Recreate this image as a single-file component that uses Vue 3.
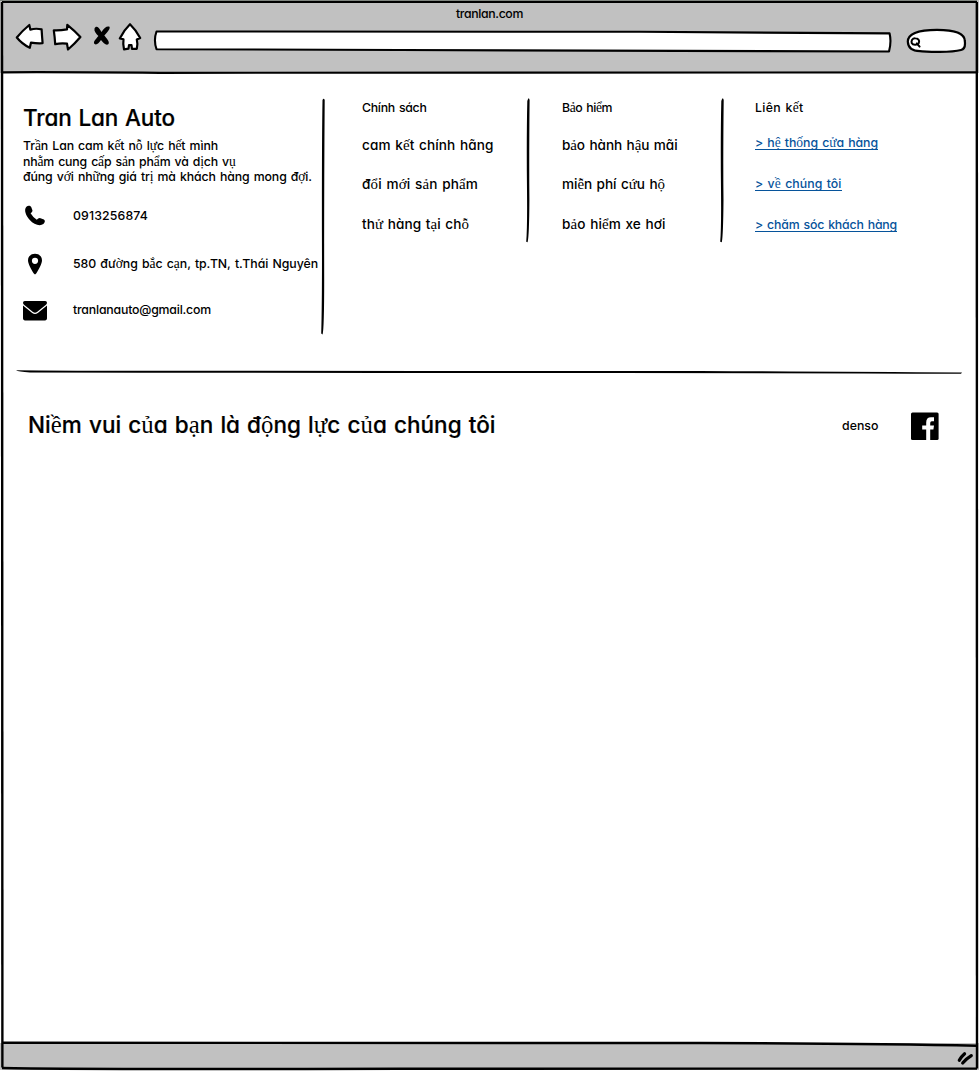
<script setup>
import { h } from 'vue'

const about = [
  { text: 'Trần Lan cam kết nỗ lực hết mình', width: 195 },
  { text: 'nhằm cung cấp sản phẩm và dịch vụ', width: 212.5 },
  { text: 'đúng với những giá trị mà khách hàng mong đợi.', width: 289 },
]

const policy = [
  { text: 'cam kết chính hãng', width: 131.5 },
  { text: 'đổi mới sản phẩm', width: 116 },
  { text: 'thử hàng tại chỗ', width: 107 },
]

const insurance = [
  { text: 'bảo hành hậu mãi', width: 115.5 },
  { text: 'miễn phí cứu hộ', width: 103 },
  { text: 'bảo hiểm xe hơi', width: 103.5 },
]

const links = [
  { text: '> hệ thống cửa hàng', width: 123 },
  { text: '> về chúng tôi', width: 86.5 },
  { text: '> chăm sóc khách hàng', width: 142 },
]

// Spreads the letters of an element so that the line is as wide as asked.
const vFit = {
  mounted(el, { value }) {
    const natural = el.getBoundingClientRect().width
    el.style.letterSpacing = (value - natural) / [...el.textContent].length + 'px'
  },
}

const Mixed = (props) =>
  props.text
    .split(/([\u1e00-\u1eff]+)/)
    .filter(Boolean)
    .map((part) => (/[\u1e00-\u1eff]/.test(part) ? h('span', { class: 'marked' }, part) : part))
Mixed.props = ['text']
</script>

<template>
  <div class="window">
    <header class="chrome">
      <div class="title"><span v-fit="67" class="t">tranlan.com</span></div>
      <div class="toolbar">
        <svg class="nav" width="132" height="36" viewBox="14 20 132 36">
          <g fill="#fff" stroke="#000" stroke-width="2.2" stroke-linejoin="round">
            <path d="M16.8 37.5 Q22 31 29.3 25 L30.3 29.6 Q36 28 41.6 29.4 Q42 36 42.6 43.2 Q37 43.6 31 42.6 L29.8 47.8 Q22 44 16.8 37.5Z" />
            <path d="M53.8 30.3 Q60 30.6 67 29.4 L67.3 24.8 Q75 31 80.4 37 Q75 43.5 68 49.5 L67 43.7 Q61 43 55.2 44.2 Q54.8 37 53.8 30.3Z" />
            <path d="M130 24.2 Q136 30 140.2 38 L136.8 39.5 Q138 44 136.8 48.8 L132 48.8 L131.5 45.2 L129 45.2 L128.5 48.6 L124 49.3 Q122.8 44 123.5 39.3 L119.8 38.4 Q124 30 130 24.2Z" />
          </g>
          <path d="M94.5 28.5 C96 25.5 98.5 26.5 101.5 32 C104 27.5 107.5 25.5 109.5 26.8 C110.5 29 107.5 32 104.3 35.5 C106.5 38.5 110 41.5 108.5 44 C106.5 46 103.5 43.5 101 40 C98.5 43.5 96.5 45.5 94.3 43.8 C93 41.5 96 39 98.4 36 C96 33.5 93.8 31 94.5 28.5Z" />
        </svg>
        <svg class="address" width="742" height="26" viewBox="152 28 742 26">
          <path d="M156.5 31.5 Q400 32 640 31.8 Q780 33.2 889.6 33.4 Q891.6 42 889 51.5 Q600 51.2 400 50 Q250 49 156.5 49.2 Q153.4 40 156.5 31.5Z" fill="#fff" stroke="#000" stroke-width="2.1" stroke-linejoin="round" />
        </svg>
        <svg class="search" width="62" height="28" viewBox="905 27 62 28">
          <path d="M907.8 41.5 C908 32 922 29.8 937 29.8 C952 29.8 964.8 32 964.8 41 C965.5 46 965 49 961 50 C950 53 935 52 920 51.2 C912 51 908 47 907.8 41.5Z" fill="#fff" stroke="#000" stroke-width="2.2" />
          <g fill="none" stroke="#000" stroke-width="2" stroke-linecap="round">
            <path d="M915.3 38.2 C912.3 38 911 40.8 911.7 43 C912.8 45.3 917.5 45.4 918.8 43 C920 40.3 918 38.3 915.3 38.2Z" />
            <path d="M916.8 43.4 L919.6 46.6" />
          </g>
        </svg>
      </div>
    </header>

    <main class="page">
      <section class="info">
        <div class="company">
          <h1><span v-fit="152" class="t">Tran Lan Auto</span></h1>
          <p v-for="line in about" :key="line.text" class="line">
            <span v-fit="line.width" class="t"><Mixed :text="line.text" /></span>
          </p>
          <ul class="contacts">
            <li>
              <svg width="24" height="24" viewBox="0 0 24 24">
                <path d="M3.4 2.8 C5 1.4 7.2 1.6 8.2 3 L9.5 6.6 Q9.6 8 7.6 9.3 Q9.6 13 13.8 15.7 Q15 14 16.8 14 L20.9 15.6 C22.5 16.6 22 18.7 20.4 20 C17 22.6 10.8 20.6 6.8 16 C2.8 11.5 0.6 6 3.4 2.8Z" />
              </svg>
              <span v-fit="75" class="t">0913256874</span>
            </li>
            <li>
              <svg width="24" height="24" viewBox="0 0 24 24">
                <path fill-rule="evenodd" d="M12 1.7 C16 1.7 19 4.5 19 8.2 C19 12 15.7 17 13.2 21.6 Q12 23.2 10.8 21.6 C8.3 17 5 12 5 8.2 C5 4.5 8 1.7 12 1.7Z M12 5.7 A3.1 3.1 0 1 0 12 11.9 A3.1 3.1 0 1 0 12 5.7Z" />
              </svg>
              <span v-fit="245" class="t"><Mixed text="580 đường bắc cạn, tp.TN, t.Thái Nguyên" /></span>
            </li>
            <li>
              <svg width="24" height="24" viewBox="0 0 24 24">
                <path d="M1.8 3 H22.2 Q24 3 24 4.8 Q24 6 23 6.7 L14 14 Q12 15.4 10 14 L1 6.7 Q0 6 0 4.8 Q0 3 1.8 3Z M0 7.6 L9.2 15 Q12 17 14.8 15 L24 7.6 V20.6 Q24 22.4 22.2 22.4 H1.8 Q0 22.4 0 20.6Z" />
              </svg>
              <span v-fit="138" class="t">tranlanauto@gmail.com</span>
            </li>
          </ul>
        </div>
        <svg class="rule" width="6" height="238" viewBox="320 97 6 238">
          <path d="M322.5 100 Q323.7 97.5 324.7 100 Q324 200 324.2 280 Q324.2 328 322.6 334.5 L321.2 333.5 Q322.2 300 321.9 230 Q321.8 140 322.5 100Z" />
        </svg>
        <div class="column">
          <h2><span v-fit="64.5" class="t">Chính sách</span></h2>
          <p v-for="item in policy" :key="item.text"><span v-fit="item.width" class="t"><Mixed :text="item.text" /></span></p>
        </div>
        <svg class="rule" width="6" height="148" viewBox="525 97 6 148">
          <path d="M527.3 101 Q528.7 96 529.6 100 Q529 160 529.4 200 Q529.2 236 527.6 242.3 L526.2 241.8 Q527.4 228 527 190 Q526.4 140 527.3 101Z" />
        </svg>
        <div class="column insurance">
          <h2><span v-fit="50" class="t"><Mixed text="Bảo hiểm" /></span></h2>
          <p v-for="item in insurance" :key="item.text"><span v-fit="item.width" class="t"><Mixed :text="item.text" /></span></p>
        </div>
        <svg class="rule" width="6" height="148" viewBox="719 97 6 148">
          <path d="M721.3 101 Q722.7 96 723.7 100 Q723 160 723.5 200 Q723.2 236 721.8 242.3 L720.2 241.8 Q721.4 228 721 190 Q720.4 140 721.3 101Z" />
        </svg>
        <div class="column links">
          <h2><span v-fit="48.5" class="t"><Mixed text="Liên kết" /></span></h2>
          <p v-for="item in links" :key="item.text"><a v-fit="item.width" class="t"><Mixed :text="item.text" /></a></p>
        </div>
      </section>

      <svg class="divider" width="979" height="6" viewBox="0 368 979 6">
        <path d="M16 370.2 Q60 370.6 120 370.7 Q500 371.2 700 371 Q850 371.6 962 372.5 L961 373.8 Q800 373 620 373 Q300 372.8 30 372.4 Q18 371.6 16 370.2Z" />
      </svg>

      <section class="closing">
        <div class="slogan"><span v-fit="467.5" class="t"><Mixed text="Niềm vui của bạn là động lực của chúng tôi" /></span></div>
        <div class="brand"><span v-fit="36.5" class="t">denso</span></div>
        <svg width="28" height="28" viewBox="0 0 28 28">
          <rect y="0.4" width="27.6" height="27.6" rx="1.5" />
          <path d="M15.2 28 V17.4 H11.2 V13.6 H15.2 V10.6 Q15.2 5.2 20 5.2 H23 V9.2 H20.8 Q19.2 9.2 19.2 11 V13.6 H23 L22.4 17.4 H19.2 V28Z" fill="#fff" />
        </svg>
      </section>
    </main>

    <footer class="status">
      <svg width="20" height="18" viewBox="956 1048 20 18" fill="none" stroke="#000" stroke-width="3.2" stroke-linecap="round">
        <path d="M959.3 1060.3 Q961 1057 964.6 1053.8" />
        <path d="M962.7 1063 Q966 1059 971.3 1055.7" />
      </svg>
    </footer>

    <svg class="frame" width="979" height="1071" viewBox="0 0 979 1071" fill="none" stroke="#000">
      <path d="M0 0.5 H977" stroke="#7f857f" stroke-width="1" />
      <path d="M2 2 H977" stroke-width="2" />
      <path d="M2 2 Q2.8 500 2.4 1067.5" stroke-width="2.4" />
      <path d="M976.8 2 Q977.4 500 977 1068.5" stroke-width="2.4" />
      <path d="M2 72.3 Q60 72 160 72.8 Q500 73.2 978 72.4" stroke-width="2.2" />
      <path d="M2 1042.8 Q400 1043 700 1043 Q880 1043.4 977 1045.8" stroke-width="2.4" />
      <path d="M2 1068 Q60 1069.4 400 1068.8 L977 1068.6" stroke-width="2.4" />
    </svg>
  </div>
</template>

<style>
body {
  margin: 0;
  background: #fff;
}
</style>

<style scoped>
.window {
  position: relative;
  display: flex;
  flex-direction: column;
  width: 979px;
  height: 1071px;
  overflow: hidden;
  background: #fff;
  color: #000;
  font-family: Inter, 'Open Sans', sans-serif;
  font-size: 12.3px;
  font-weight: 550;
  font-feature-settings: 'cv11', 'calt' 0;
  line-height: 16px;
  word-spacing: 1px;
}
svg {
  display: block;
  flex: none;
}
h1,
h2,
p,
ul {
  margin: 0;
  padding: 0;
  font-size: inherit;
  font-weight: inherit;
}
.t {
  display: inline-block;
  white-space: nowrap;
}
h1 .t,
.slogan .t {
  -webkit-text-stroke: 0.2px currentColor;
}
:deep(.marked) {
  font-family: 'Liberation Serif', serif;
  font-size: 1.1em;
  font-weight: 400;
  line-height: 1px;
  -webkit-text-stroke-width: 0;
}
.frame {
  position: absolute;
  inset: 0;
  pointer-events: none;
}
.chrome {
  box-sizing: border-box;
  height: 73px;
  padding-top: 6px;
  background: #c1c1c1;
}
.title {
  display: flex;
  justify-content: center;
  height: 14px;
}
.toolbar {
  display: flex;
  padding-left: 14px;
}
.address {
  margin: 8px 0 0 6px;
}
.search {
  margin: 7px 0 0 11px;
}
.page {
  flex: 1;
}
.info {
  display: flex;
  height: 295px;
  padding-left: 23px;
}
.company {
  width: 297px;
  padding-top: 31px;
}
.company h1 {
  height: 28px;
  margin-bottom: 6px;
  font-size: 22.5px;
  line-height: 28px;
}
.line {
  height: 15.5px;
  line-height: 16px;
}
.contacts {
  padding-top: 7.5px;
  list-style: none;
}
.contacts li {
  display: flex;
  align-items: center;
  gap: 26px;
  height: 48px;
}
.contacts li:last-child {
  height: 43px;
}
.rule {
  margin-top: 24px;
}
.column {
  width: 163px;
  padding: 27px 0 0 36px;
}
.column h2 {
  height: 16px;
  margin-bottom: 19px;
}
.column p {
  height: 20px;
  margin-bottom: 19px;
  font-size: 13.6px;
  line-height: 20px;
}
.column p:nth-child(3) {
  margin-bottom: 20px;
}
.insurance {
  width: 157px;
  padding-left: 31px;
}
.links {
  width: 180px;
  padding-left: 30px;
}
.links h2 {
  margin-bottom: 17px;
}
.links p,
.links p:nth-child(3) {
  margin-bottom: 21px;
  font-size: 12.3px;
}
.links a {
  height: 16px;
  border-bottom: 1px solid #06539b;
  color: #06539b;
}
.closing {
  display: flex;
  align-items: center;
  height: 32px;
  padding: 36px 0 0 28px;
}
.slogan {
  width: 814px;
  margin-top: -2px;
  font-size: 22.5px;
  line-height: 30px;
}
.brand {
  width: 69px;
  margin-top: -1px;
}
.status {
  display: flex;
  justify-content: flex-end;
  box-sizing: border-box;
  height: 27px;
  margin-bottom: 1px;
  padding: 5px 3px 0 0;
  background: #c1c1c1;
}
</style>
